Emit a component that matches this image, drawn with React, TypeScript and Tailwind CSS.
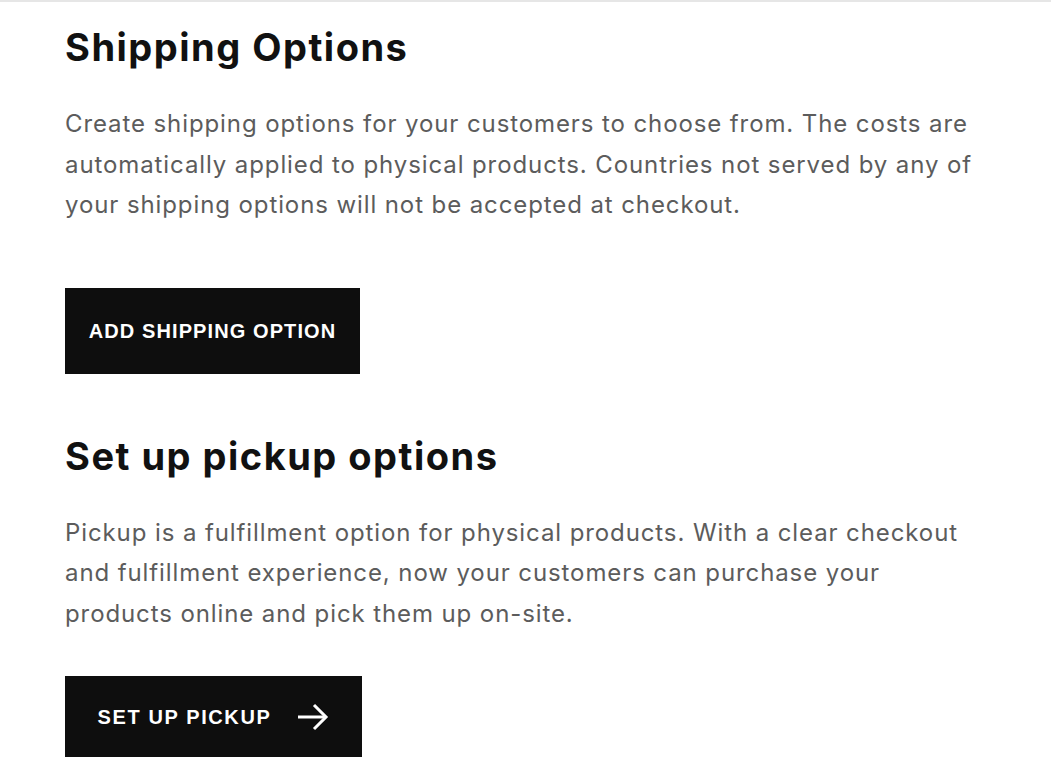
function Arrow() {
  return (
    <svg width="32" height="32" viewBox="0 0 32 32" fill="none" stroke="currentColor" strokeWidth="3" strokeLinecap="butt">
      <path d="M1 16H29" />
      <path d="M17 4L29 16L17 28" />
    </svg>
  );
}

function Section({
  title,
  text,
  children,
}: {
  title: string;
  text: string;
  children: React.ReactNode;
}) {
  return (
    <section>
      <h2 className="text-[38px] font-bold leading-[48px] tracking-[1.5px] text-[#111]">{title}</h2>
      <p className="mt-[33px] max-w-[915px] text-[24px] leading-[40.5px] tracking-[0.9px] text-[#5c5c5c]">{text}</p>
      {children}
    </section>
  );
}

export default function App() {
  return (
    <div
      className="min-h-[761px] w-[1051px] overflow-hidden border-t-2 border-[#e6e6e6] bg-white pl-[65px] pt-[21px]"
      style={{ fontFamily: 'Inter, "Liberation Sans", sans-serif' }}
    >
      <Section
        title="Shipping Options"
        text="Create shipping options for your customers to choose from. The costs are automatically applied to physical products. Countries not served by any of your shipping options will not be accepted at checkout."
      >
        <button
          type="button"
          className="mt-[62px] flex h-[86px] w-[295px] items-center justify-center bg-[#0e0e0e] text-[20px] font-bold tracking-[1.1px] text-white"
          style={{ fontFamily: '"Liberation Sans", Arial, sans-serif' }}
        >
          ADD SHIPPING OPTION
        </button>
      </Section>

      <div className="mt-[58px]">
        <Section
          title="Set up pickup options"
          text="Pickup is a fulfillment option for physical products. With a clear checkout and fulfillment experience, now your customers can purchase your products online and pick them up on-site."
        >
          <button
            type="button"
            className="mt-[42px] flex h-[81px] w-[297px] items-center justify-center gap-[26px] bg-[#0e0e0e] text-[20px] font-bold tracking-[1.6px] text-white"
            style={{ fontFamily: '"Liberation Sans", Arial, sans-serif' }}
          >
            SET UP PICKUP
            <Arrow />
          </button>
        </Section>
      </div>
    </div>
  );
}
